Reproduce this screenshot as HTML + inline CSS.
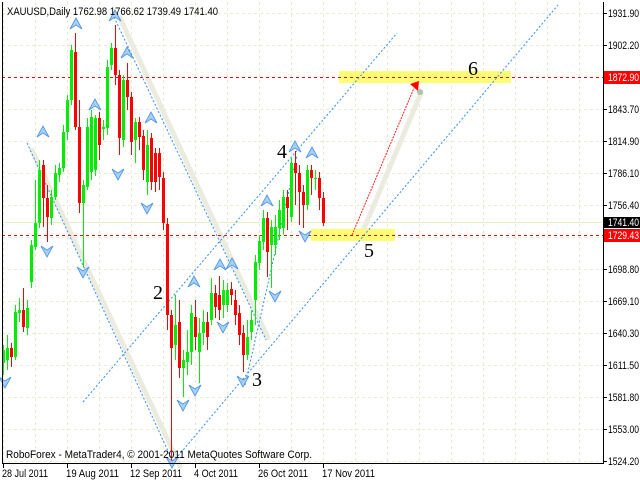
<!DOCTYPE html>
<html><head><meta charset="utf-8"><style>
html,body{margin:0;padding:0;background:#fff;width:640px;height:480px;overflow:hidden}
svg{display:block}
.s{font-family:"Liberation Sans","DejaVu Sans",sans-serif}
.w{font-family:"Liberation Serif","DejaVu Serif",serif;font-size:20px}
</style></head><body>
<svg id="s" width="640" height="480" xmlns="http://www.w3.org/2000/svg">
<rect width="640" height="480" fill="#fff"/>
<g id="grid" stroke="#ecebd2" stroke-width="1" stroke-dasharray="3,3"></g>
<line x1="2" y1="222.5" x2="603" y2="222.5" stroke="#ececc8" stroke-width="1"/>
<g stroke="#ebebdf" stroke-width="5" stroke-linecap="round">
<line x1="32" y1="150" x2="180" y2="466"/>
<line x1="120" y1="18" x2="268" y2="338"/>
<line x1="360" y1="238" x2="421" y2="93"/>
</g>
<rect x="339" y="71" width="172" height="12" fill="#ffff66" opacity="0.9"/>
<rect x="311" y="229" width="84" height="12" fill="#ffff66" opacity="0.9"/>
<g stroke="#ff0000" stroke-width="1" stroke-dasharray="3,3">
<line x1="2" y1="77.5" x2="603" y2="77.5"/>
<line x1="2" y1="235.5" x2="603" y2="235.5"/>
</g>
<g stroke="#2f8ef0" stroke-width="1" stroke-dasharray="2,2" fill="none">
<line x1="27" y1="143" x2="173" y2="462"/>
<line x1="114" y1="17" x2="266" y2="340"/>
<line x1="83" y1="402" x2="397" y2="33"/>
<line x1="173" y1="462" x2="558" y2="5"/>
<line x1="245" y1="385" x2="297" y2="155"/>
</g>
<g id="candles"></g>
<line x1="352" y1="235" x2="414" y2="88" stroke="#ff2020" stroke-width="1" stroke-dasharray="2,1"/>
<polygon points="410,84 419,81 418,91" fill="#ff0000"/>
<circle cx="420" cy="92" r="3" fill="#9cb89c" opacity="0.8"/>
<g id="marks"></g>
<g fill="#000">
<text class="w" x="468" y="75">6</text>
<text class="w" x="364" y="257">5</text>
<text class="w" x="277" y="158">4</text>
<text class="w" x="153" y="299">2</text>
<text class="w" x="252" y="386">3</text>
</g>
<line x1="2.5" y1="2" x2="2.5" y2="463" stroke="#000"/>
<line x1="603.5" y1="2" x2="603.5" y2="464" stroke="#000"/>
<line x1="2" y1="463.5" x2="604" y2="463.5" stroke="#000"/>
<g id="axis" class="s" font-size="11" fill="#000"></g>
<rect x="604" y="217" width="36" height="11" fill="#000"/>
<text class="s" x="608" y="226" font-size="11" fill="#fff" textLength="31" lengthAdjust="spacingAndGlyphs">1741.40</text>
<rect x="604" y="229" width="36" height="13" fill="#ff0000"/>
<text class="s" x="608" y="239" font-size="11" fill="#fff" textLength="31" lengthAdjust="spacingAndGlyphs">1729.43</text>
<rect x="604" y="71" width="36" height="13" fill="#ff0000"/>
<text class="s" x="608" y="81" font-size="11" fill="#fff" textLength="31" lengthAdjust="spacingAndGlyphs">1872.90</text>
<text class="s" x="7" y="15" font-size="11" fill="#000" textLength="211" lengthAdjust="spacingAndGlyphs">XAUUSD,Daily  1762.98 1766.62 1739.49 1741.40</text>
<text class="s" x="6" y="458" font-size="11" fill="#000" textLength="306" lengthAdjust="spacingAndGlyphs">RoboForex - MetaTrader4, © 2001-2011 MetaQuotes Software Corp.</text>
</svg>
<script>
var NS="http://www.w3.org/2000/svg";
function el(p,t,a){var e=document.createElementNS(NS,t);for(var k in a)e.setAttribute(k,a[k]);p.appendChild(e);return e;}
var g=document.getElementById("grid");
for(var x=3;x<603;x+=32)el(g,"line",{x1:x+.5,y1:2,x2:x+.5,y2:463});
for(var y=13;y<463;y+=32)el(g,"line",{x1:2,y1:y+.5,x2:603,y2:y+.5});
var d="3 g 350 363 345 375|7 g 348 360 335 370|11 r 348 357 343 367|15 g 312 357 305 360|19 g 310 313 298 322|23 r 310 327 288 332|27 g 308 328 300 335|31 g 245 282 240 288|35 g 223 247 180 250|39 g 170 223 160 228|43 r 165 198 160 227|47 r 198 217 185 242|51 g 197 218 190 225|55 g 173 197 165 200|59 g 168 175 163 182|63 g 132 168 125 172|67 g 100 132 95 140|71 g 50 100 45 105|75 r 52 127 33 130|79 r 127 203 100 213|83 g 185 203 180 267|87 g 127 187 118 190|91 g 117 172 110 180|95 g 118 170 115 176|99 r 118 145 112 160|103 g 127 129 120 140|107 g 67 128 60 135|111 g 48 65 43 70|115 r 48 75 25 85|119 r 75 138 70 155|123 g 80 140 75 147|127 r 80 97 63 110|131 r 97 142 92 155|135 g 122 140 118 163|139 r 122 137 117 150|143 r 136 170 130 180|147 g 145 182 130 195|151 r 138 182 133 190|155 r 153 182 148 192|159 r 153 177 148 190|163 r 178 223 172 230|167 r 224 315 218 330|171 r 315 348 310 462|175 g 325 345 295 360|179 r 322 368 300 378|183 g 360 368 350 397|187 g 352 362 330 375|191 g 313 352 305 365|195 r 317 337 300 350|199 g 333 352 318 383|203 g 322 333 310 345|207 r 322 337 312 350|211 g 293 320 278 325|215 r 293 307 285 318|219 r 295 310 276 320|223 g 290 305 280 318|227 g 290 305 283 312|231 r 289 295 282 305|235 r 300 315 290 325|239 r 313 335 305 345|243 r 333 355 325 372|247 g 337 355 320 360|251 g 320 332 310 340|255 g 262 300 255 325|259 g 241 263 235 270|263 g 218 242 210 250|267 r 218 252 212 277|271 g 227 245 220 288|275 g 227 245 215 255|279 g 210 228 200 240|283 g 197 228 190 235|287 r 197 208 190 230|291 g 163 217 158 222|295 r 163 173 151 205|299 r 173 192 165 225|303 r 192 205 185 228|307 g 170 205 165 210|311 r 170 178 165 195|315 g 178 179 170 190|319 r 178 198 172 210|323 r 198 223 192 226";
var c=document.getElementById("candles");
d.split("|").forEach(function(s){var a=s.split(" ");var x=+a[0],col=a[1]=="g"?"#00ee00":"#ff0000";
var t=+a[2],b=+a[3],h=+a[4],l=+a[5];
el(c,"rect",{x:x,y:h,width:1,height:l-h,fill:col});
el(c,"rect",{x:x-1,y:t,width:3,height:Math.max(1,b-t),fill:col});});
var m=document.getElementById("marks");
function up(x,y){el(m,"polygon",{points:(x-6)+","+(y+5)+" "+x+","+(y-6)+" "+(x+6)+","+(y+5)+" "+x+","+(y+1),fill:"#a8d0f4",stroke:"#4a94e4","stroke-width":"0.8"});}
function dn(x,y){el(m,"polygon",{points:(x-6)+","+(y-5)+" "+x+","+(y+6)+" "+(x+6)+","+(y-5)+" "+x+","+(y-1),fill:"#a8d0f4",stroke:"#4a94e4","stroke-width":"0.8"});}
[[76,24],[43,132],[95,105],[115,16],[127,53],[151,118],[295,147],[312,153],[267,201],[194,282],[220,265],[232,264]].forEach(function(p){up(p[0],p[1]);});
[[118,174],[147,208],[305,236],[5,382],[47,251],[83,272],[195,390],[183,405],[223,327],[243,381],[275,296],[172,462]].forEach(function(p){dn(p[0],p[1]);});
var ax=document.getElementById("axis");
var labs=[["1931.90",13],["1902.20",45],["1843.70",109],["1814.90",141],["1786.10",173],["1756.40",205],["1698.80",269],["1669.10",301],["1640.30",333],["1611.50",365],["1581.80",397],["1553.00",429],["1524.20",461]];
labs.forEach(function(l){el(ax,"line",{x1:603,y1:l[1]+.5,x2:607,y2:l[1]+.5,stroke:"#000"});var t=el(ax,"text",{x:608,y:l[1]+4,textLength:31,lengthAdjust:"spacingAndGlyphs"});t.textContent=l[0];});
var dates=[["28 Jul 2011",3,46],["19 Aug 2011",67,53],["12 Sep 2011",131,52],["4 Oct 2011",195,44],["26 Oct 2011",259,50],["17 Nov 2011",323,53]];
dates.forEach(function(l){el(ax,"line",{x1:l[1]+.5,y1:463,x2:l[1]+.5,y2:468,stroke:"#000"});var t=el(ax,"text",{x:l[1]-1,y:477,textLength:l[2],lengthAdjust:"spacingAndGlyphs"});t.textContent=l[0];});
</script>
</body></html>
